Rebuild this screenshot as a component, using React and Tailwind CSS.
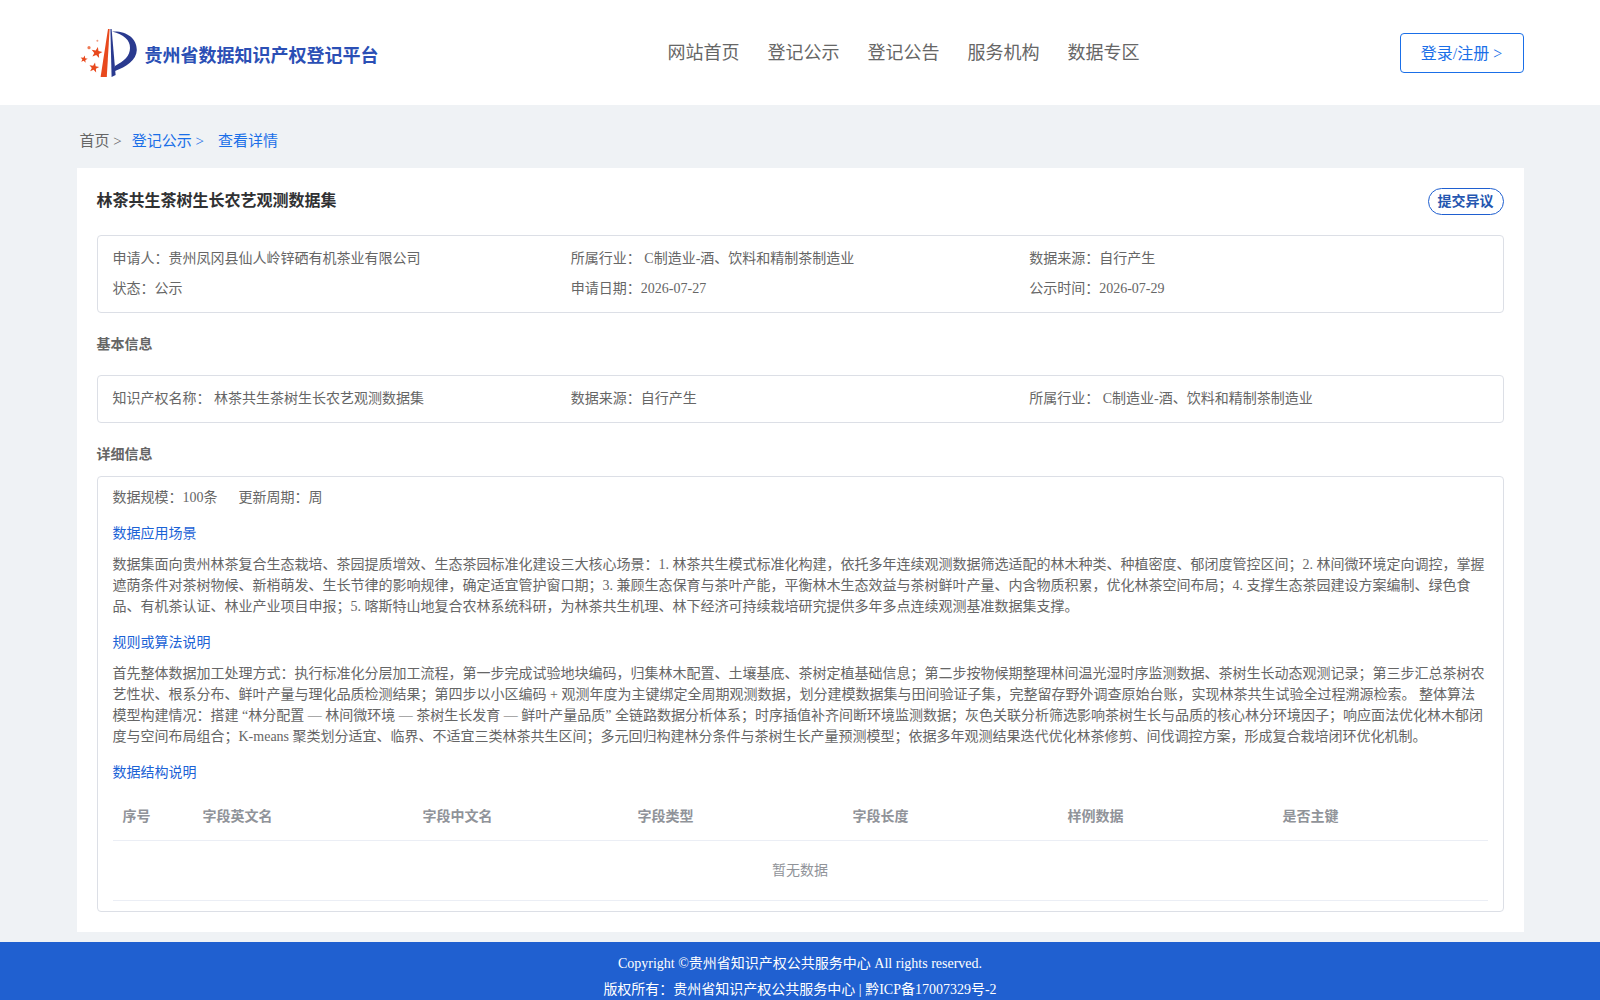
import React from "react";

const navItems = ["网站首页", "登记公示", "登记公告", "服务机构", "数据专区"];
const columns = [
  { name: "序号", width: "w-[80px]" },
  { name: "字段英文名", width: "w-[220px]" },
  { name: "字段中文名", width: "w-[215px]" },
  { name: "字段类型", width: "w-[215px]" },
  { name: "字段长度", width: "w-[215px]" },
  { name: "样例数据", width: "w-[215px]" },
  { name: "是否主键", width: "w-[215px]" },
];

function starPoints(cx, cy, r, rot) {
  const pts = [];
  for (let i = 0; i < 10; i++) {
    const rad = i % 2 === 0 ? r : r * 0.42;
    const a = (Math.PI / 5) * i - Math.PI / 2 + rot;
    pts.push(`${(cx + rad * Math.cos(a)).toFixed(2)},${(cy + rad * Math.sin(a)).toFixed(2)}`);
  }
  return pts.join(" ");
}

const Logo = () => (
  <svg width="60" height="52" viewBox="10 8 60 52" className="shrink-0 mt-[2px]">
    <polygon points="38,9 39.6,9 36.8,57 30.6,57" fill="#e8491d" />
    <polygon points="40.4,9 41.6,9 45.6,55 41.6,57" fill="#2a3a8f" />
    <path d="M42 11.5 C56 10.5 67 18 66.8 30 C66.6 40 56 47 45 51 L45 46 C54 41 60 36 60 28 C60 20 54 14.5 42 11.5 Z" fill="#2a3a8f" />
    <polygon points={starPoints(26.7, 32.7, 5.8, 0.2)} fill="#e8491d" />
    <polygon points={starPoints(24, 47.7, 5.2, 0.2)} fill="#e8491d" />
    <polygon points={starPoints(14, 39.3, 3.8, 0.2)} fill="#e8491d" />
    <circle cx="19" cy="27.7" r="1.6" fill="#ee7a55" />
    <circle cx="27.4" cy="20.7" r="1" fill="#ee9a80" />
  </svg>
);

const Cell = ({ children }) => <div className="h-[30px] leading-[30px]">{children}</div>;

export default function App() {
  return (
    <div className="h-screen overflow-hidden bg-[#eff2f5] text-[14px] text-[#666] font-['Liberation_Serif','Noto_Sans_CJK_SC',serif]">
      {/* header */}
      <div className="bg-white h-[105px]">
        <div className="w-[1447px] mx-auto flex items-center h-full pl-[3px]">
          <div className="flex items-center w-[301px]">
            <Logo />
            <span className="ml-[5px] mt-[8px] text-[18px] font-bold text-[#2b4fb5] whitespace-nowrap">贵州省数据知识产权登记平台</span>
          </div>
          <div className="flex gap-[28px] ml-[287px] mt-[1px] text-[18px] text-[#666]">
            {navItems.map((item) => (
              <span key={item}>{item}</span>
            ))}
          </div>
          <button className="ml-auto w-[124px] h-[40px] mt-[1px] pt-[1px] border border-[#1a6fe8] rounded-[4px] text-[16px] text-[#1a6fe8]">
            登录/注册 &gt;
          </button>
        </div>
      </div>

      {/* breadcrumb */}
      <div className="w-[1447px] mx-auto h-[63px] flex items-center pl-[3px] pt-[10px] text-[15px]">
        <span>首页 &gt;</span>
        <span className="ml-[10px] text-[#1a6fe8]">登记公示 &gt;</span>
        <span className="ml-[14px] text-[#1a6fe8]">查看详情</span>
      </div>

      {/* card */}
      <div className="w-[1447px] mx-auto bg-white p-[20px] mb-[10px]">
        <div className="flex justify-between items-start mb-[20px]">
          <div className="text-[16px] font-bold text-[#303133] leading-[26px]">林茶共生茶树生长农艺观测数据集</div>
          <button className="w-[76px] h-[27px] border border-[#1f5fd0] rounded-[14px] text-[14px] font-bold text-[#2456b0]">提交异议</button>
        </div>

        <div className="border border-[#dcdfe6] rounded-[4px] px-[15px] py-[8px] grid grid-cols-3">
          <Cell>申请人：贵州凤冈县仙人岭锌硒有机茶业有限公司</Cell>
          <Cell>所属行业： C制造业-酒、饮料和精制茶制造业</Cell>
          <Cell>数据来源：自行产生</Cell>
          <Cell>状态：公示</Cell>
          <Cell>申请日期：2026-07-27</Cell>
          <Cell>公示时间：2026-07-29</Cell>
        </div>

        <div className="mt-[21px] mb-[19px] h-[22px] leading-[22px] font-bold">基本信息</div>

        <div className="border border-[#dcdfe6] rounded-[4px] px-[15px] py-[8px] grid grid-cols-3">
          <Cell>知识产权名称： 林茶共生茶树生长农艺观测数据集</Cell>
          <Cell>数据来源：自行产生</Cell>
          <Cell>所属行业： C制造业-酒、饮料和精制茶制造业</Cell>
        </div>

        <div className="mt-[21px] mb-[10px] h-[22px] leading-[22px] font-bold">详细信息</div>

        <div className="border border-[#dcdfe6] rounded-[4px] px-[15px] pt-[10px] pb-[10px] leading-[21px]">
          <div>
            <span className="mr-[21px]">数据规模：100条</span>
            <span>更新周期：周</span>
          </div>

          <div className="mt-[15px] text-[#1a62d6]">数据应用场景</div>
          <p className="mt-[10px]">
            数据集面向贵州林茶复合生态栽培、茶园提质增效、生态茶园标准化建设三大核心场景：1. 林茶共生模式标准化构建，依托多年连续观测数据筛选适配的林木种类、种植密度、郁闭度管控区间；2. 林间微环境定向调控，掌握遮荫条件对茶树物候、新梢萌发、生长节律的影响规律，确定适宜管护窗口期；3. 兼顾生态保育与茶叶产能，平衡林木生态效益与茶树鲜叶产量、内含物质积累，优化林茶空间布局；4. 支撑生态茶园建设方案编制、绿色食品、有机茶认证、林业产业项目申报；5. 喀斯特山地复合农林系统科研，为林茶共生机理、林下经济可持续栽培研究提供多年多点连续观测基准数据集支撑。
          </p>

          <div className="mt-[15px] text-[#1a62d6]">规则或算法说明</div>
          <p className="mt-[10px]">
            首先整体数据加工处理方式：执行标准化分层加工流程，第一步完成试验地块编码，归集林木配置、土壤基底、茶树定植基础信息；第二步按物候期整理林间温光湿时序监测数据、茶树生长动态观测记录；第三步汇总茶树农艺性状、根系分布、鲜叶产量与理化品质检测结果；第四步以小区编码 + 观测年度为主键绑定全周期观测数据，划分建模数据集与田间验证子集，完整留存野外调查原始台账，实现林茶共生试验全过程溯源检索。 整体算法模型构建情况：搭建 “林分配置 — 林间微环境 — 茶树生长发育 — 鲜叶产量品质” 全链路数据分析体系；时序插值补齐间断环境监测数据；灰色关联分析筛选影响茶树生长与品质的核心林分环境因子；响应面法优化林木郁闭度与空间布局组合；K-means 聚类划分适宜、临界、不适宜三类林茶共生区间；多元回归构建林分条件与茶树生长产量预测模型；依据多年观测结果迭代优化林茶修剪、间伐调控方案，形成复合栽培闭环优化机制。
          </p>

          <div className="mt-[15px] text-[#1a62d6]">数据结构说明</div>
          <table className="mt-[9px] w-full table-fixed border-collapse">
            <thead>
              <tr className="border-b border-[#ebeef5]">
                {columns.map((col) => (
                  <th key={col.name} className={`${col.width} h-[48px] px-[10px] pt-[2px] text-left font-bold text-[#909399]`}>
                    {col.name}
                  </th>
                ))}
              </tr>
            </thead>
            <tbody>
              <tr className="border-b border-[#ebeef5]">
                <td colSpan={7} className="h-[60px] text-center text-[#909399]">暂无数据</td>
              </tr>
            </tbody>
          </table>
        </div>
      </div>

      {/* footer */}
      <div className="bg-[#2060d0] pt-[9px] text-center text-white leading-[26px]">
        <div>Copyright ©贵州省知识产权公共服务中心 All rights reserved.</div>
        <div>版权所有：贵州省知识产权公共服务中心 | 黔ICP备17007329号-2</div>
      </div>
    </div>
  );
}
